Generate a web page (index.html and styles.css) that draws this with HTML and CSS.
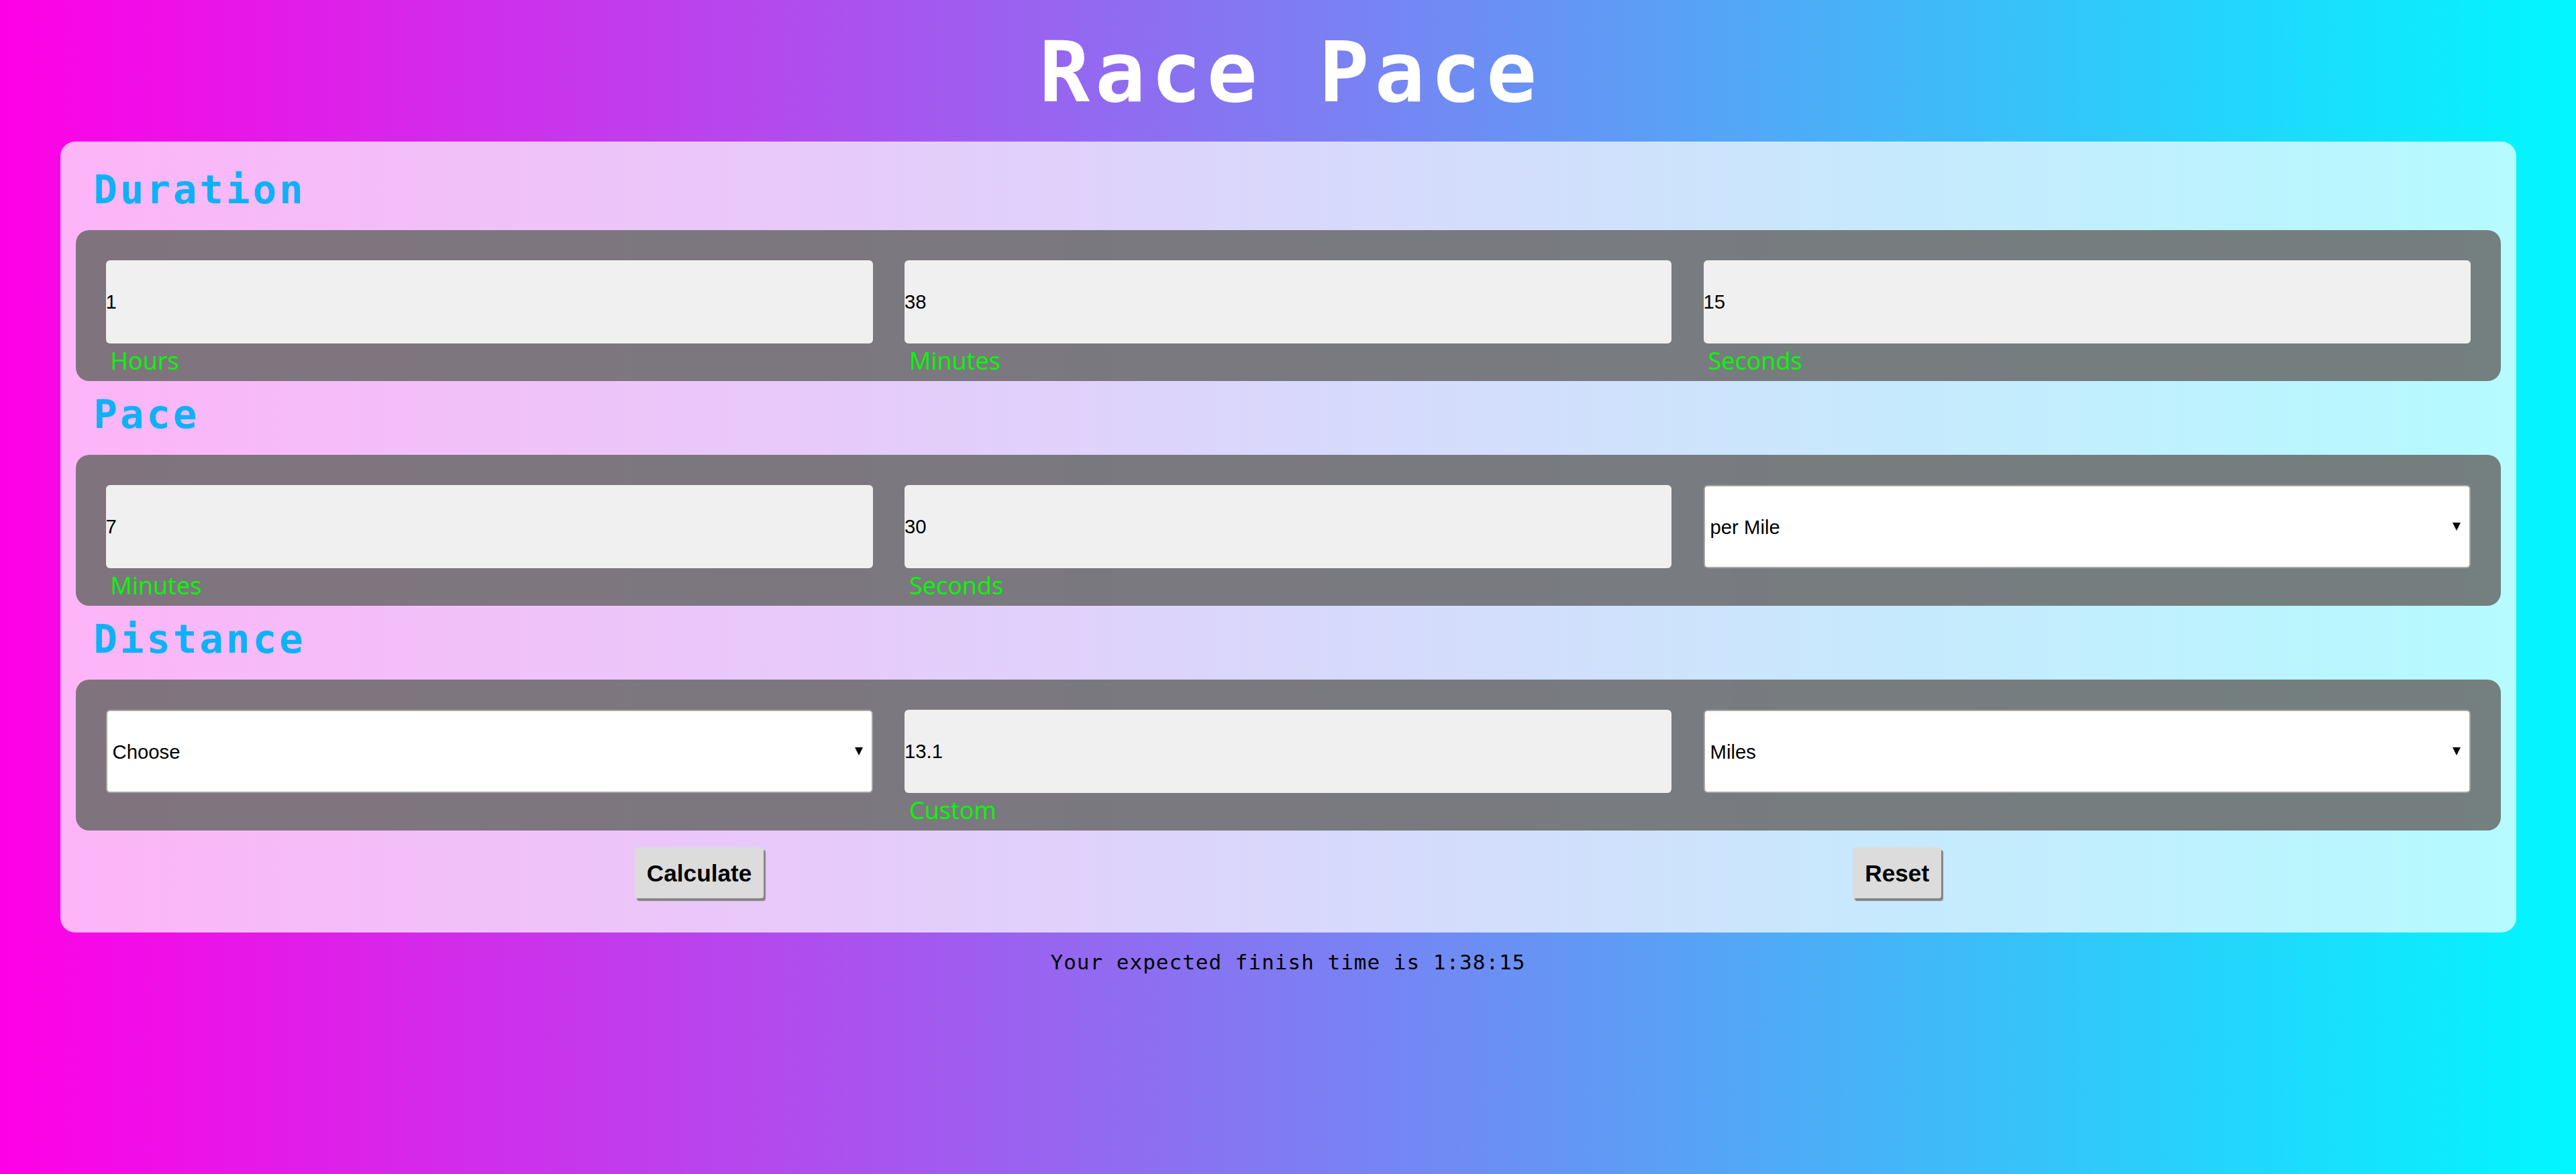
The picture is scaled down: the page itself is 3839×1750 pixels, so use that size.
FILE: index.html
```html
<!DOCTYPE html>
<html lang="en">
<head>
<meta charset="utf-8">
<title>Race Pace</title>
<link rel="stylesheet" href="styles.css">
</head>
<body>
<div class="page">
  <h1 class="title">Race Pace</h1>
  <form class="card">
    <h2 class="section-title">Duration</h2>
    <div class="panel">
      <div class="field">
        <input class="num" type="number" value="1">
        <label class="field-label">Hours</label>
      </div>
      <div class="field">
        <input class="num" type="number" value="38">
        <label class="field-label">Minutes</label>
      </div>
      <div class="field">
        <input class="num" type="number" value="15">
        <label class="field-label">Seconds</label>
      </div>
    </div>

    <h2 class="section-title">Pace</h2>
    <div class="panel">
      <div class="field">
        <input class="num" type="number" value="7">
        <label class="field-label">Minutes</label>
      </div>
      <div class="field">
        <input class="num" type="number" value="30">
        <label class="field-label">Seconds</label>
      </div>
      <div class="field">
        <div class="select-wrap">
          <select class="pick">
            <option>per Mile</option>
            <option>per Kilometer</option>
          </select>
        </div>
      </div>
    </div>

    <h2 class="section-title">Distance</h2>
    <div class="panel">
      <div class="field">
        <div class="select-wrap">
          <select class="pick">
            <option>Choose</option>
            <option>5K</option>
            <option>10K</option>
            <option>Half Marathon</option>
            <option>Marathon</option>
          </select>
        </div>
      </div>
      <div class="field">
        <input class="num" type="number" value="13.1">
        <label class="field-label">Custom</label>
      </div>
      <div class="field">
        <div class="select-wrap">
          <select class="pick">
            <option>Miles</option>
            <option>Kilometers</option>
          </select>
        </div>
      </div>
    </div>

    <div class="actions">
      <button type="button" class="btn">Calculate</button>
      <button type="button" class="btn">Reset</button>
    </div>
  </form>
  <p class="result">Your expected finish time is 1:38:15</p>
</div>
</body>
</html>
```

FILE: styles.css
```css
* {
  box-sizing: border-box;
}

html, body {
  margin: 0;
  padding: 0;
}

body {
  min-height: 100vh;
  background: linear-gradient(to right, #ff00e6, #00f7ff);
  font-family: "Liberation Sans", Arial, sans-serif;
}

.page {
  padding-top: 35px;
}

.title {
  margin: 0 0 30px;
  text-align: center;
  font-family: "DejaVu Sans Mono", monospace;
  font-weight: bold;
  font-size: 125px;
  line-height: 146px;
  letter-spacing: 8px;
  padding-left: 8px;
  color: #ffffff;
}

.card {
  width: 3660px;
  margin: 0 auto;
  padding: 22px 23px 51px;
  background: rgba(255, 255, 255, 0.7);
  border-radius: 22px;
}

.section-title {
  margin: 0;
  padding: 0 0 10px 27px;
  height: 110px;
  font-family: "DejaVu Sans Mono", monospace;
  font-weight: bold;
  font-size: 59px;
  line-height: 100px;
  letter-spacing: 4px;
  color: #0cb2f6;
}

.panel {
  display: grid;
  grid-template-columns: repeat(3, 1fr);
  column-gap: 47.5px;
  align-items: start;
  padding: 45px 45px 6px;
  background: rgba(105, 105, 105, 0.85);
  border-radius: 20px;
}

.field {
  display: flex;
  flex-direction: column;
}

.num {
  height: 124px;
  width: 100%;
  margin: 0;
  padding: 0;
  border: none;
  border-radius: 6px;
  background: #f0f0f0;
  font-family: "Liberation Sans", Arial, sans-serif;
  font-size: 29.3px;
  color: #000;
  outline: none;
  -moz-appearance: textfield;
}

.num::-webkit-inner-spin-button,
.num::-webkit-outer-spin-button {
  -webkit-appearance: none;
  margin: 0;
}

.field-label {
  display: block;
  padding: 2px 0 0 7px;
  height: 50px;
  font-family: "Open Sans", "Noto Sans", sans-serif;
  font-size: 36px;
  line-height: 48px;
  color: #00ff00;
}

.select-wrap {
  position: relative;
}

.select-wrap::after {
  content: "";
  position: absolute;
  right: 15px;
  top: 56px;
  width: 0;
  height: 0;
  border-left: 6px solid transparent;
  border-right: 6px solid transparent;
  border-top: 12px solid #000;
  pointer-events: none;
}

.pick {
  -webkit-appearance: none;
  appearance: none;
  display: block;
  width: 100%;
  height: 124px;
  margin: 0;
  padding: 0 40px 0 8px;
  border: 2px solid #a6a6a6;
  border-radius: 6px;
  background: #ffffff;
  font-family: "Liberation Sans", Arial, sans-serif;
  font-size: 29.3px;
  color: #000;
  outline: none;
}

.actions {
  display: flex;
  justify-content: center;
  gap: 1623px;
  margin-top: 25px;
}

.btn {
  height: 76px;
  padding: 19px 18px 17px;
  border: none;
  border-radius: 4px;
  background: #dcdcdc;
  box-shadow: 3px 4px 1px #858585;
  font-family: "Liberation Sans", Arial, sans-serif;
  font-weight: bold;
  font-size: 35.2px;
  line-height: 40px;
  color: #000;
}

.result {
  margin: 26px 0 0;
  text-align: center;
  font-family: "DejaVu Sans Mono", monospace;
  font-size: 31px;
  line-height: 36px;
  letter-spacing: 1px;
  color: #000;
}
```
